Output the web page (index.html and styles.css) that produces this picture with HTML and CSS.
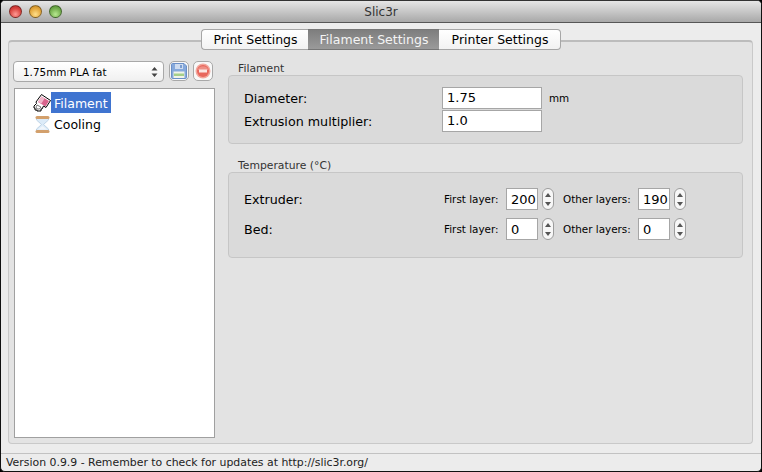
FILE: index.html
```html
<!DOCTYPE html>
<html lang="en">
<head>
    <meta charset="UTF-8">
    <title>Slic3r</title>
    <link rel="stylesheet" href="styles.css">
</head>
<body>
<div class="window">
    <div class="titlebar">
        <div class="lights">
            <span class="light red"></span>
            <span class="light yellow"></span>
            <span class="light green"></span>
        </div>
        <div class="title">Slic3r</div>
    </div>

    <div class="content">
        <div class="tabs">
            <div class="tab first">Print Settings</div>
            <div class="tab active">Filament Settings</div>
            <div class="tab last">Printer Settings</div>
        </div>

        <div class="panel">
            <div class="sidebar">
                <div class="preset-row">
                    <div class="select">
                        <span>1.75mm PLA fat</span>
                        <svg class="select-arrows" width="7" height="12" viewBox="0 0 7 12">
                            <path d="M3.5 1 L6.5 4.5 H0.5 Z M3.5 11 L0.5 7.5 H6.5 Z" fill="#444"/>
                        </svg>
                    </div>
                    <div class="icon-btn">
                        <svg width="16" height="16" viewBox="0 0 16 16">
                            <path d="M0.5 1.5 Q0.5 0.5 1.5 0.5 H13 L15.5 3 V14.5 Q15.5 15.5 14.5 15.5 H1.5 Q0.5 15.5 0.5 14.5 Z" fill="#86a9dc" stroke="#6b8fc6"/>
                            <rect x="4" y="1" width="8" height="5" fill="#cfdcef"/>
                            <rect x="9" y="2" width="2" height="3" fill="#7b9dd0"/>
                            <rect x="2.5" y="8.5" width="11" height="6.5" fill="#f1f4ea"/>
                            <rect x="3" y="10.5" width="10" height="2.5" fill="#a6cf8a"/>
                        </svg>
                    </div>
                    <div class="icon-btn">
                        <svg width="16" height="16" viewBox="0 0 16 16">
                            <circle cx="8" cy="8" r="7.5" fill="#f3a79d"/>
                            <circle cx="8" cy="8" r="6" fill="#e8665c"/>
                            <path d="M2.4 7 A6 6 0 0 1 13.6 7 Z" fill="#ee8f85"/>
                            <rect x="4" y="6.5" width="8" height="3" fill="#fbe6e3"/>
                        </svg>
                    </div>
                </div>

                <div class="tree">
                    <div class="tree-item">
                        <svg class="tree-icon" width="18" height="18" viewBox="0 0 18 18">
                            <path d="M8.5 0.5 L17.5 6.5 L13 13.5 L10.5 12 L9 15 H8 V17 H4 V16 H2 V14 H1 V12 L3.5 9.5 L3 8 Z" fill="#fff" stroke="#000"/>
                            <path d="M8.5 2.5 L16 7 L12.5 12.5 L5 8 Z" fill="#d9648c"/>
                            <path d="M8.5 2.5 L11.5 4.5 L8.5 9.5 L5 8 Z" fill="#f0b8cb"/>
                            <path d="M4 11 L8 13 L6.5 15 H4 L3 13 Z" fill="#fff" stroke="#222" stroke-width="0.6"/>
                        </svg>
                        <span class="tree-label selected">Filament</span>
                    </div>
                    <div class="tree-item">
                        <svg class="tree-icon" width="18" height="18" viewBox="0 0 18 18">
                            <path d="M3.5 3 H15.5 V5 L10.5 9.5 L15.5 14 V16 H3.5 V14 L8.5 9.5 L3.5 5 Z" fill="#dcebf8" stroke="#b4cbe0" stroke-width="0.8"/>
                            <path d="M5 14.5 L9.5 11 L14 14.5 Z" fill="#f1f6fb"/>
                            <rect x="2.5" y="1" width="14" height="3" rx="1.5" fill="#d3a06c"/>
                            <rect x="2.5" y="15" width="14" height="3" rx="1.5" fill="#d3a06c"/>
                        </svg>
                        <span class="tree-label">Cooling</span>
                    </div>
                </div>
            </div>

            <div class="options">
                <div class="group">
                    <div class="group-title">Filament</div>
                    <div class="group-box filament-box">
                        <div class="label">Diameter:</div>
                        <div class="field wide">1.75</div>
                        <div class="unit">mm</div>
                        <div class="label">Extrusion multiplier:</div>
                        <div class="field wide">1.0</div>
                    </div>
                </div>

                <div class="group">
                    <div class="group-title">Temperature (°C)</div>
                    <div class="group-box temp-box">
                        <div class="label">Extruder:</div>
                        <div class="small-label">First layer:</div>
                        <div class="spin">
                            <div class="field narrow">200</div>
                            <div class="stepper"><span class="up"></span><span class="down"></span></div>
                        </div>
                        <div class="small-label">Other layers:</div>
                        <div class="spin">
                            <div class="field narrow">190</div>
                            <div class="stepper"><span class="up"></span><span class="down"></span></div>
                        </div>

                        <div class="label">Bed:</div>
                        <div class="small-label">First layer:</div>
                        <div class="spin">
                            <div class="field narrow">0</div>
                            <div class="stepper"><span class="up"></span><span class="down"></span></div>
                        </div>
                        <div class="small-label">Other layers:</div>
                        <div class="spin">
                            <div class="field narrow">0</div>
                            <div class="stepper"><span class="up"></span><span class="down"></span></div>
                        </div>
                    </div>
                </div>
            </div>
        </div>
    </div>

    <div class="statusbar">Version 0.9.9 - Remember to check for updates at http://slic3r.org/</div>
</div>
</body>
</html>
```

FILE: styles.css
```css
html, body {
    margin: 0;
    padding: 0;
    background-color: #000;
}

.window {
    width: 762px;
    height: 472px;
    box-sizing: border-box;
    display: flex;
    flex-direction: column;
    background-color: #ececec;
    border-radius: 5px;
    border: 1px solid #111;
    border-top-color: #333;
    overflow: hidden;
    font-family: "DejaVu Sans", sans-serif;
    color: #000;
}

.titlebar {
    height: 22px;
    box-sizing: border-box;
    flex: none;
    display: flex;
    align-items: center;
    position: relative;
    background: linear-gradient(#e6e6e6, #a8a8a8);
    border-bottom: 1px solid #565656;
}

.lights {
    display: flex;
    gap: 7px;
    padding-left: 8px;
}

.light {
    width: 13px;
    height: 13px;
    border-radius: 50%;
    box-sizing: border-box;
    border: 1px solid rgba(0, 0, 0, 0.4);
}

.red {
    background: radial-gradient(circle at 50% 75%, #ff9a94, #d8423c 60%, #b52a2a);
}

.yellow {
    background: radial-gradient(circle at 50% 75%, #ffdf8a, #e2a53a 60%, #c08420);
}

.green {
    background: radial-gradient(circle at 50% 75%, #b7e890, #72ac4c 60%, #4f8c30);
}

.title {
    position: absolute;
    left: 0;
    right: 0;
    text-align: center;
    font-size: 12px;
    color: #333;
}

.content {
    flex: 1;
    display: flex;
    flex-direction: column;
    padding: 6px 8px 9px 7px;
    min-height: 0;
}

.tabs {
    display: flex;
    align-self: center;
    height: 21px;
    margin-bottom: -10px;
    position: relative;
    z-index: 1;
    font-size: 12.5px;
}

.tab {
    display: flex;
    align-items: center;
    justify-content: center;
    box-sizing: border-box;
    padding-left: 2px;
    background: linear-gradient(#ffffff, #f2f2f2);
    border: 1px solid #a6a6a6;
    border-left: none;
    border-right: none;
}

.tab.first {
    width: 107px;
    border-left: 1px solid #a6a6a6;
    border-radius: 4px 0 0 4px;
}

.tab.active {
    width: 131px;
    color: #f4f4f4;
    background: linear-gradient(#7e7e7e, #9a9a9a);
    border-color: #767676;
}

.tab.last {
    width: 122px;
    border-right: 1px solid #a6a6a6;
    border-radius: 0 4px 4px 0;
}

.panel {
    flex: 1;
    min-height: 0;
    display: flex;
    background-color: #e3e3e3;
    border: 1px solid #c9c9c9;
    border-top: 2px solid #bcbcbc;
    border-radius: 4px;
    padding: 19px 9px 5px 4px;
    gap: 13px;
}

.sidebar {
    width: 202px;
    flex: none;
    display: flex;
    flex-direction: column;
}

.preset-row {
    display: flex;
    gap: 4px;
    height: 21px;
    margin-bottom: 6px;
}

.select {
    width: 151px;
    box-sizing: border-box;
    display: flex;
    align-items: center;
    justify-content: space-between;
    padding: 0 5px 0 9px;
    font-size: 10.4px;
    background: linear-gradient(#ffffff, #f0f0f0);
    border: 1px solid #a8a8a8;
    border-radius: 4px;
    margin-right: 1px;
}

.icon-btn {
    width: 20px;
    height: 20px;
    box-sizing: border-box;
    display: flex;
    align-items: center;
    justify-content: center;
    background: #f8f8f8;
    border: 1px solid #a8a8a8;
    border-radius: 5px;
}

.tree {
    flex: 1;
    margin-left: 1px;
    background-color: #fff;
    border: 1px solid #a0a0a0;
    padding-top: 3px;
}

.tree-item {
    height: 21px;
    display: flex;
    align-items: center;
    padding-left: 18px;
    font-size: 12.5px;
}

.tree-icon {
    flex: none;
}

.tree-label {
    height: 21px;
    line-height: 23px;
    padding: 0 3px;
}

.tree-label.selected {
    background-color: #3f74d0;
    color: #fff;
}

.options {
    flex: 1;
    display: flex;
    flex-direction: column;
    gap: 14px;
}

.group-title {
    font-size: 10.8px;
    color: #333;
    height: 14px;
    line-height: 16px;
    padding-left: 10px;
}

.group-box {
    background-color: #dadada;
    border: 1px solid #c6c6c6;
    border-radius: 4px;
    box-sizing: border-box;
    width: 515px;
}

.filament-box {
    height: 69px;
    display: grid;
    grid-template-columns: 198px 100px auto;
    grid-auto-rows: 22px;
    row-gap: 1px;
    align-content: start;
    align-items: center;
    padding: 11px 0 0 15px;
}

.label {
    font-size: 12.7px;
}

.unit {
    font-size: 10.4px;
    padding-left: 7px;
}

.field {
    box-sizing: border-box;
    background-color: #fff;
    border: 1px solid #a6a6a6;
    font-size: 13px;
    display: flex;
    align-items: center;
    padding-left: 4px;
}

.field.wide {
    width: 100px;
    height: 22px;
    padding-bottom: 2px;
}

.field.narrow {
    width: 32px;
    height: 22px;
}

.temp-box {
    height: 86px;
    display: grid;
    grid-template-columns: 200px 62px 57px 75px auto;
    grid-auto-rows: 22px;
    row-gap: 8px;
    align-content: start;
    align-items: center;
    padding: 15px 0 0 15px;
}

.small-label {
    font-size: 10.4px;
}

.spin {
    display: flex;
    gap: 4px;
}

.stepper {
    width: 12px;
    height: 22px;
    box-sizing: border-box;
    display: flex;
    flex-direction: column;
    align-items: center;
    justify-content: center;
    gap: 5px;
    background: #f7f7f7;
    border: 1px solid #9c9c9c;
    border-radius: 6px;
}

.up {
    border-left: 3px solid transparent;
    border-right: 3px solid transparent;
    border-bottom: 4px solid #555;
}

.down {
    border-left: 3px solid transparent;
    border-right: 3px solid transparent;
    border-top: 4px solid #555;
}

.statusbar {
    flex: none;
    height: 18px;
    box-sizing: border-box;
    line-height: 17px;
    border-top: 1px solid #c2c2c2;
    padding-left: 5px;
    font-size: 10.9px;
    color: #222;
}
```
